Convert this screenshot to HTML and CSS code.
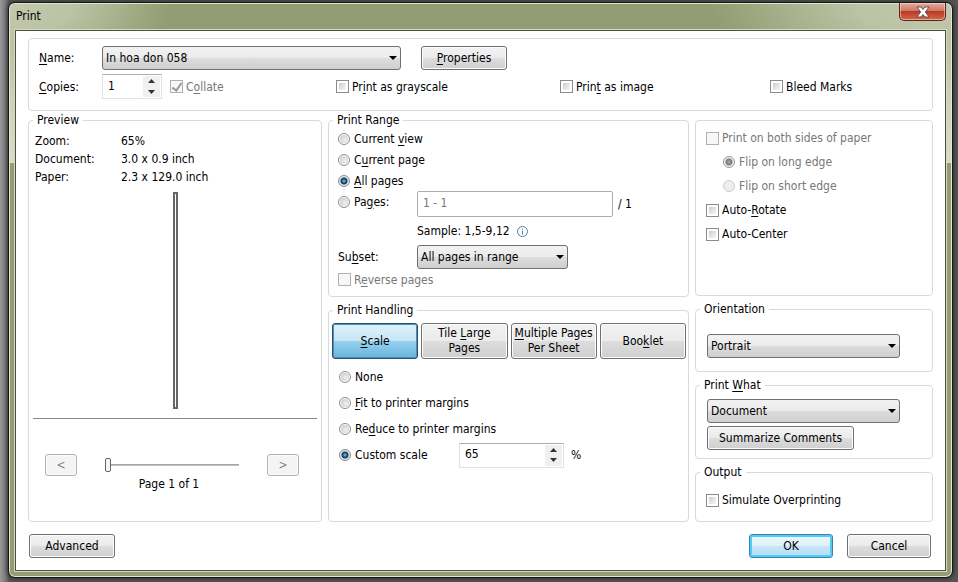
FILE: index.html
```html
<!DOCTYPE html>
<html lang="en">
<head>
    <meta charset="UTF-8">
    <meta name="viewport" content="width=device-width, initial-scale=1.0">
    <title>Print</title>
    <link rel="stylesheet" href="styles.css">
</head>
<body>
    <main class="window">
        <header class="title-bar">
            <h1>Print</h1>
            <button type="button" class="close" aria-label="Close">
                <svg width="14" height="12" viewBox="0 0 14 12">
                    <path d="M1 1h4L7 3.4 9 1h4L9.4 6 13 11H9L7 8.6 5 11H1l3.6-5z" fill="#fff" stroke="#6b4a55" stroke-width="1"/>
                </svg>
            </button>
        </header>
        <form class="client">
            <section class="panel printer">
                <div class="printer-row">
                    <label for="printer-name"><u>N</u>ame:</label>
                    <span class="select name-select">
                        <select id="printer-name"><option>In hoa don 058</option></select>
                    </span>
                    <button type="button" class="btn properties"><u>P</u>roperties</button>
                </div>
                <div class="printer-row">
                    <label for="copies"><u>C</u>opies:</label>
                    <div class="printer-options">
                        <div class="copies">
                            <span class="spinner">
                                <input type="number" id="copies" value="1">
                                <span class="spin-buttons">
                                    <button type="button" aria-label="More copies"><svg width="7" height="4"><path d="M0 4L3.5 0 7 4z"/></svg></button>
                                    <button type="button" aria-label="Fewer copies"><svg width="7" height="4"><path d="M0 0L3.5 4 7 0z"/></svg></button>
                                </span>
                            </span>
                            <label class="choice disabled"><input type="checkbox" checked disabled><span>C<u>o</u>llate</span></label>
                        </div>
                        <label class="choice"><input type="checkbox"><span>Pr<u>i</u>nt as grayscale</span></label>
                        <label class="choice"><input type="checkbox"><span>Prin<u>t</u> as image</span></label>
                        <label class="choice"><input type="checkbox"><span>Bleed Marks</span></label>
                    </div>
                </div>
            </section>

            <div class="columns">
                <fieldset class="preview">
                    <legend>Preview</legend>
                    <dl>
                        <dt>Zoom:</dt><dd>65%</dd>
                        <dt>Document:</dt><dd>3.0 x 0.9 inch</dd>
                        <dt>Paper:</dt><dd>2.3 x 129.0 inch</dd>
                    </dl>
                    <div class="stage"><div class="sheet"></div></div>
                    <div class="pager">
                        <button type="button" class="btn page-btn" disabled>&lt;</button>
                        <input type="range" min="1" max="10" value="1" aria-label="Page">
                        <button type="button" class="btn page-btn" disabled>&gt;</button>
                    </div>
                    <p class="page-count">Page 1 of 1</p>
                </fieldset>

                <div class="column">
                    <fieldset class="range">
                        <legend>Print Range</legend>
                        <label class="choice"><input type="radio" name="range"><span>Current <u>v</u>iew</span></label>
                        <label class="choice"><input type="radio" name="range"><span>C<u>u</u>rrent page</span></label>
                        <label class="choice"><input type="radio" name="range" checked><span><u>A</u>ll pages</span></label>
                        <div class="pages">
                            <label class="choice"><input type="radio" name="range"><span>Pa<u>g</u>es:</span></label>
                            <div class="pages-field">
                                <input type="text" class="text-box" placeholder="1 - 1" aria-label="Pages"><span>/ 1</span>
                            </div>
                            <div class="sample">
                                <span>Sample: 1,5-9,12</span>
                                <svg width="13" height="13" viewBox="0 0 13 13">
                                    <circle cx="6.5" cy="6.5" r="5" fill="#fff" stroke="#4b8299"/>
                                    <path d="M6 3.5h1v1H6zM6 5.5h1v4H6z" fill="#4b8299"/>
                                </svg>
                            </div>
                            <label for="subset">Su<u>b</u>set:</label>
                            <span class="select subset">
                                <select id="subset"><option>All pages in range</option></select>
                            </span>
                        </div>
                        <label class="choice disabled"><input type="checkbox" disabled><span>R<u>e</u>verse pages</span></label>
                    </fieldset>

                    <fieldset class="handling">
                        <legend>Print Handling</legend>
                        <div class="modes">
                            <button type="button" class="btn active"><span><u>S</u>cale</span></button>
                            <button type="button" class="btn"><span>Tile <u>L</u>arge Pages</span></button>
                            <button type="button" class="btn"><span><u>M</u>ultiple Pages Per Sheet</span></button>
                            <button type="button" class="btn"><span>Boo<u>k</u>let</span></button>
                        </div>
                        <div class="scaling">
                            <label class="choice"><input type="radio" name="scale"><span>None</span></label>
                            <label class="choice"><input type="radio" name="scale"><span><u>F</u>it to printer margins</span></label>
                            <label class="choice"><input type="radio" name="scale"><span>Re<u>d</u>uce to printer margins</span></label>
                            <div class="custom">
                                <label class="choice"><input type="radio" name="scale" checked><span>Custom scale</span></label>
                                <span class="spinner wide">
                                    <input type="number" value="65" aria-label="Custom scale percent">
                                    <span class="spin-buttons">
                                        <button type="button" aria-label="Larger"><svg width="7" height="4"><path d="M0 4L3.5 0 7 4z"/></svg></button>
                                        <button type="button" aria-label="Smaller"><svg width="7" height="4"><path d="M0 0L3.5 4 7 0z"/></svg></button>
                                    </span>
                                </span>
                                <span>%</span>
                            </div>
                        </div>
                    </fieldset>
                </div>

                <div class="column">
                    <section class="panel duplex">
                        <label class="choice disabled"><input type="checkbox" disabled><span>Print on both sides of paper</span></label>
                        <label class="choice disabled indent"><input type="radio" name="flip" checked disabled><span>Flip on long edge</span></label>
                        <label class="choice disabled indent"><input type="radio" name="flip" disabled><span>Flip on short edge</span></label>
                        <label class="choice"><input type="checkbox"><span>Auto-<u>R</u>otate</span></label>
                        <label class="choice"><input type="checkbox"><span>Auto-Center</span></label>
                    </section>
                    <fieldset class="orientation">
                        <legend>Orientation</legend>
                        <span class="select">
                            <select aria-label="Orientation"><option>Portrait</option></select>
                        </span>
                    </fieldset>
                    <fieldset class="what">
                        <legend>Print <u>W</u>hat</legend>
                        <span class="select">
                            <select aria-label="Print what"><option>Document</option></select>
                        </span>
                        <button type="button" class="btn summarize">Summarize Comments</button>
                    </fieldset>
                    <fieldset class="output">
                        <legend>Output</legend>
                        <label class="choice"><input type="checkbox"><span>Simulate Overprinting</span></label>
                    </fieldset>
                </div>
            </div>

            <footer class="actions">
                <button type="button" class="btn">Advanced</button>
                <div class="confirm">
                    <button type="submit" class="btn default">OK</button>
                    <button type="button" class="btn">Cancel</button>
                </div>
            </footer>
        </form>
    </main>
</body>
</html>
```

FILE: styles.css
```css
* {
    box-sizing: border-box;
}

body {
    margin: 0;
    min-height: 100vh;
    padding: 2px 5px 4px 8px;
    background: linear-gradient(90deg, #9a9a9a 0, #77777c 6px, #555 9px, #555 100%);
    color: #000;
}

body, button, input, select {
    font-family: "DejaVu Sans Condensed", "Noto Sans", sans-serif;
    font-size: 12px;
    line-height: 16px;
}

u {
    text-underline-offset: 2px;
}

.window {
    padding: 0 6px 6px;
    border: 1px solid #15180f;
    border-radius: 7px;
    background:
        radial-gradient(ellipse 160px 90px at 0 0, #c3c9ad, #bcc3a4 40%, #bcc3a400) no-repeat,
        radial-gradient(ellipse 240px 90px at 100% 0, #c3c9ad, #bcc3a4 40%, #bcc3a400) no-repeat,
        linear-gradient(#b9c0a0, #d9dccb) 0 0 / 6px 160px no-repeat,
        linear-gradient(#b9c0a0, #d9dccb) 100% 0 / 6px 160px no-repeat,
        #939c73;
    box-shadow: inset 0 0 0 1px #e3e7d3, 0 0 5px #222;
}

.title-bar {
    display: flex;
    justify-content: space-between;
    align-items: flex-start;
    height: 27px;
}

.title-bar h1 {
    margin: 0;
    padding: 5px 1px;
    font-size: 12px;
    font-weight: normal;
}

.close {
    display: flex;
    justify-content: center;
    align-items: center;
    width: 47px;
    height: 18px;
    padding: 0;
    border: 1px solid #5a2420;
    border-top: 0;
    border-radius: 0 0 5px 5px;
    background: linear-gradient(#e3aa9b, #d07765 45%, #b93a22 50%, #d4674a);
    box-shadow: inset 0 0 0 1px #ffffff70;
}

.client {
    padding: 7px 12px 12px;
    border: 1px solid #4a5238;
    background: #fff;
    box-shadow: 0 0 0 1px #d5d9c3;
}

.panel, fieldset {
    min-width: 0;
    margin: 0;
    border: 1px solid #d5dadc;
    border-radius: 4px;
}

legend {
    padding: 0 4px;
}

/* printer */

.printer {
    display: grid;
    gap: 4px;
    padding: 7px 10px 11px;
}

.printer-row {
    display: grid;
    grid-template-columns: 63px 299px auto;
    align-items: center;
    min-height: 24px;
}

.printer-row:last-child {
    grid-template-columns: 63px 1fr;
}

.printer-options {
    display: grid;
    grid-template-columns: 234fr 224fr 210fr 152fr;
    align-items: center;
}

.properties {
    justify-self: start;
    margin-left: 20px;
}

.copies {
    display: flex;
    align-items: center;
    gap: 8px;
}

/* controls */

.btn {
    min-width: 86px;
    height: 24px;
    padding: 0 11px;
    border: 1px solid #707070;
    border-radius: 3px;
    background: linear-gradient(#f2f2f2, #ebebeb 50%, #dddddd 50%, #cfcfcf);
    box-shadow: inset 0 0 0 1px #fcfcfc;
    color: #000;
}

.btn.active {
    border-color: #2c4f6b;
    background: linear-gradient(#e0f2fc, #c4e5f6 50%, #98d1ef 50%, #68b3db);
    box-shadow: inset 0 0 0 1px #4f8fb5;
}

.btn.default {
    border-color: #3c7fb1;
    background: linear-gradient(#eef7fc, #dff1fb 50%, #c8e6f8 50%, #b5dcf5);
    box-shadow: inset 0 0 0 2px #4fcdf3;
}

.select {
    display: grid;
    align-items: center;
}

.select select {
    grid-area: 1 / 1;
    appearance: none;
    width: 100%;
    height: 24px;
    padding: 0 20px 0 3px;
    border: 1px solid #707070;
    border-radius: 3px;
    background: linear-gradient(#f2f2f2, #ebebeb 50%, #dddddd 50%, #cfcfcf);
    color: #000;
}

.select::after {
    content: "";
    grid-area: 1 / 1;
    justify-self: end;
    margin-right: 4px;
    border: 4px solid transparent;
    border-top-color: #000;
    border-bottom: 0;
    pointer-events: none;
}

.choice {
    display: flex;
    align-items: center;
    gap: 3px;
}

.choice.disabled {
    color: #777;
}

.choice input {
    appearance: none;
    flex: none;
    width: 13px;
    height: 13px;
    margin: 0;
    border: 1px solid #8a8b8c;
    background: linear-gradient(135deg, #cbcfd2, #f6f6f6) content-box #f4f4f4;
    padding: 2px;
}

.choice input[type="radio"] {
    width: 12px;
    height: 12px;
    padding: 1px;
    border-radius: 50%;
    background: radial-gradient(circle at 60% 60%, #f2f2f2, #bfc2c5) content-box #f4f4f4;
}

.choice input[type="radio"] + span {
    margin-left: 1px;
}

.choice input[type="radio"]:checked {
    background: radial-gradient(circle, #8fd0e8 0, #1c5a80 2px, #123a57 3px, #dce6ec 4px);
}

.choice input:disabled {
    border-color: #b1b1b1;
    background: #f7f7f7;
}

.choice input[type="radio"]:disabled {
    border-color: #ccc;
    background: #eee;
}

.choice input[type="radio"]:disabled:checked {
    border-color: #999;
    background: radial-gradient(circle, #aaa 0, #777 3px, #eee 4px);
}

.choice input[type="checkbox"]:checked {
    display: grid;
    padding: 0;
    place-items: center;
}

.choice input[type="checkbox"]:checked::after {
    content: "";
    width: 4px;
    height: 8px;
    margin-bottom: 2px;
    border: solid #999;
    border-width: 0 2px 2px 0;
    transform: rotate(35deg);
}

.spinner {
    display: flex;
    width: 60px;
    height: 25px;
    border: 1px solid #dfe2e5;
    border-top-color: #abadb3;
}

.spinner.wide {
    width: 105px;
}

.spinner input {
    appearance: textfield;
    flex: 1;
    min-width: 0;
    padding: 0 5px 2px;
    border: 0;
    background: none;
}

.spinner input::-webkit-inner-spin-button {
    display: none;
}

.spin-buttons {
    display: grid;
    width: 17px;
    margin: 1px;
    background: #f0f0f0;
}

.spin-buttons button {
    display: grid;
    place-items: center;
    padding: 0;
    border: 0;
    background: none;
}

.spin-buttons svg {
    display: block;
    fill: #333;
}

/* columns */

.columns {
    display: grid;
    grid-template-columns: 294fr 361fr 238fr;
    gap: 6px;
    margin-top: 1px;
}

.column {
    display: flex;
    flex-direction: column;
    gap: 5px;
    min-width: 0;
}

.preview {
    display: flex;
    flex-direction: column;
    padding: 4px 4px 29px;
}

.preview dl {
    display: grid;
    grid-template-columns: 86px 1fr;
    margin: 0 2px;
    line-height: 18px;
}

.preview dd {
    margin: 0;
}

.stage {
    display: flex;
    flex: 1;
    justify-content: center;
    padding: 6px 0 9px;
    border-bottom: 1px solid #888;
}

.sheet {
    width: 5px;
    border: 2px solid #666;
}

.pager {
    display: flex;
    justify-content: space-between;
    align-items: center;
    padding: 35px 18px 0 12px;
}

.page-btn {
    min-width: 32px;
    height: 22px;
    padding: 0;
    border-color: #adb2b5;
    background: #f4f4f4;
    color: #838383;
}

.pager input {
    appearance: none;
    width: 134px;
    height: 16px;
    margin: 0;
    background: linear-gradient(#999, #ccc) center / 100% 2px no-repeat;
}

.pager input::-webkit-slider-thumb {
    appearance: none;
    width: 6px;
    height: 14px;
    border: 1px solid #666;
    border-radius: 2px;
    background: #f4f4f4;
}

.page-count {
    margin: 0;
    padding-right: 12px;
    text-align: center;
}

.range {
    padding: 0 9px 6px;
}

.range legend {
    margin-left: -5px;
}

.range .choice {
    height: 21px;
}

.pages {
    display: grid;
    grid-template-columns: 79px 1fr;
    align-items: center;
}

.pages .choice {
    align-self: start;
}

.pages-field {
    display: flex;
    align-items: center;
    gap: 5px;
}

.text-box {
    width: 196px;
    height: 26px;
    padding: 0 5px 3px;
    border: 1px solid #abadb3;
    border-radius: 2px;
}

.text-box::placeholder {
    color: #777;
}

.sample {
    display: flex;
    grid-column: 2;
    align-items: center;
    gap: 6px;
    height: 28px;
}

.subset {
    width: 151px;
}

.handling {
    flex: 1;
    padding: 5px 2px 53px 3px;
}

.handling legend {
    margin-left: 1px;
}

.modes {
    display: grid;
    grid-template-columns: repeat(4, 1fr);
    gap: 3px;
}

.modes .btn {
    min-width: 0;
    height: 36px;
    padding: 0 2px;
    line-height: 15px;
}

.scaling {
    padding: 5px 7px 0;
}

.scaling .choice {
    height: 26px;
}

.custom {
    display: grid;
    grid-template-columns: 120px 105px auto;
    align-items: center;
}

.custom > span:last-child {
    margin-left: 7px;
}

.duplex {
    min-height: 176px;
    margin-top: 8px;
    padding: 5px 10px;
}

.duplex .choice {
    height: 24px;
}

.indent {
    padding-left: 17px;
}

.orientation {
    padding: 17px 32px 13px 11px;
}

.what {
    padding: 6px 32px 8px 11px;
}

.orientation legend, .what legend, .output legend {
    margin-left: -7px;
}

.what .select {
    margin-bottom: 3px;
}

.output {
    flex: 1;
    padding: 12px 10px 13px;
}

.output legend {
    margin-left: -6px;
}

.actions, .confirm {
    display: flex;
    justify-content: space-between;
}

.actions {
    padding: 12px 2px 0 1px;
}

.confirm {
    gap: 14px;
}

.confirm .btn {
    min-width: 84px;
}
```
